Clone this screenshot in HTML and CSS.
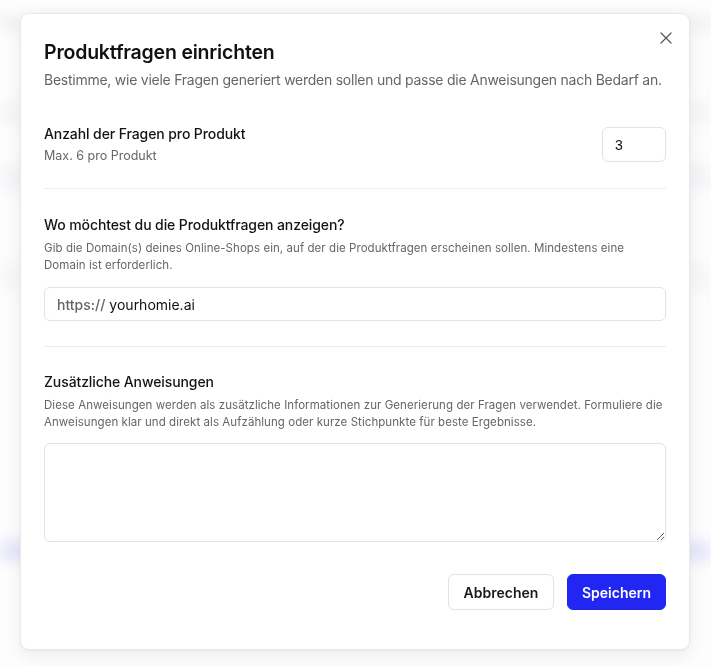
FILE: index.html
```html
<!DOCTYPE html>
<html lang="de">
<head>
<meta charset="utf-8">
<title>Produktfragen einrichten</title>
<link rel="stylesheet" href="styles.css">
</head>
<body>
<div class="backdrop">
  <div class="ghost ghost-a"></div>
  <div class="ghost ghost-b"></div>
  <div class="ghost ghost-c"></div>
  <div class="ghost ghost-d"></div>
  <div class="ghost ghost-e"></div>
</div>
<div class="overlay">
  <div class="modal">
    <button class="close" aria-label="Schließen">
      <svg width="12" height="12" viewBox="0 0 12 12"><path d="M1 1L11 11M11 1L1 11" stroke="#555" stroke-width="1.2" stroke-linecap="round" fill="none"/></svg>
    </button>
    <h1 class="title">Produktfragen einrichten</h1>
    <p class="subtitle">Bestimme, wie viele Fragen generiert werden sollen und passe die Anweisungen nach Bedarf an.</p>

    <div class="row">
      <div class="row-text">
        <div class="label">Anzahl der Fragen pro Produkt</div>
        <div class="hint-sm">Max. 6 pro Produkt</div>
      </div>
      <input class="num" type="text" value="3">
    </div>

    <div class="divider"></div>

    <div class="section">
      <div class="label">Wo möchtest du die Produktfragen anzeigen?</div>
      <p class="hint">Gib die Domain(s) deines Online-Shops ein, auf der die Produktfragen erscheinen sollen. Mindestens eine Domain ist erforderlich.</p>
      <div class="domain"><span class="prefix">https://</span><span class="value">yourhomie.ai</span></div>
    </div>

    <div class="divider divider-2"></div>

    <div class="section">
      <div class="label">Zusätzliche Anweisungen</div>
      <p class="hint">Diese Anweisungen werden als zusätzliche Informationen zur Generierung der Fragen verwendet. Formuliere die Anweisungen klar und direkt als Aufzählung oder kurze Stichpunkte für beste Ergebnisse.</p>
      <textarea class="area"></textarea>
    </div>

    <div class="footer">
      <button class="btn btn-secondary">Abbrechen</button>
      <button class="btn btn-primary">Speichern</button>
    </div>
  </div>
</div>
</body>
</html>
```
FILE: styles.css
```css
* { box-sizing: border-box; }
html, body { margin: 0; height: 100%; }
body {
  background: #fdfdfe;
  font-family: "Inter", "Noto Sans", sans-serif;
  color: #111;
  overflow: hidden;
}
.backdrop {
  height: 667px;
  display: flex;
  flex-direction: column;
  filter: blur(6px);
}
.ghost { width: 100%; }
.ghost-a { margin-top: 14px; height: 18px; background: #f3f3f5; }
.ghost-b { margin-top: 70px; height: 22px; background: #f6f6f8; }
.ghost-c { margin-top: 40px; height: 26px; background: #f5f5f8; }
.ghost-d { margin-top: 74px; height: 26px; background: #f7f7f9; }
.ghost-e { margin-top: 250px; height: 22px; background: #e8e8fb; }

.overlay {
  position: fixed;
  inset: 0;
  display: flex;
  justify-content: flex-start;
  align-items: flex-start;
  padding: 13px 0 0 20px;
}
.modal {
  position: relative;
  width: 670px;
  background: #fff;
  border: 1px solid #e9e9ec;
  border-radius: 9px;
  box-shadow: 0 6px 18px rgba(0,0,0,0.07), 0 1px 3px rgba(0,0,0,0.05);
  padding: 24px 23px 39px;
}
.close {
  position: absolute;
  top: 14px;
  right: 13px;
  width: 20px;
  height: 20px;
  padding: 0;
  border: 0;
  background: none;
  display: flex;
  align-items: center;
  justify-content: center;
}
.title {
  margin: 0;
  font-size: 19.5px;
  line-height: 28px;
  font-weight: 600;
  color: #111;
  letter-spacing: -0.2px;
}
.subtitle {
  margin: 4px 0 0;
  font-size: 14px;
  line-height: 20px;
  color: #666;
  letter-spacing: -0.25px;
}
.row {
  margin-top: 33px;
  display: flex;
  align-items: center;
  justify-content: space-between;
}
.label {
  font-size: 14px;
  line-height: 22px;
  font-weight: 500;
  color: #141414;
  letter-spacing: -0.1px;
}
.hint-sm {
  margin-top: 1px;
  font-size: 12.5px;
  line-height: 20px;
  color: #666;
}
.num {
  width: 64px;
  height: 35px;
  border: 1px solid #e3e3e6;
  border-radius: 6px;
  padding: 0 12px;
  font-family: "Liberation Sans", Arial, sans-serif;
  font-size: 14px;
  color: #111;
  background: #fff;
  outline: none;
}
.divider {
  height: 1px;
  background: #ececee;
  margin: 22px 0 25px;
}
.divider-2 { margin: 25px 0 24px; }
.section { display: flex; flex-direction: column; }
.hint {
  margin: 4px 0 0;
  font-size: 11.5px;
  line-height: 17px;
  color: #666;
  letter-spacing: 0.06px;
}
.domain {
  margin-top: 13px;
  height: 34px;
  border: 1px solid #e3e3e6;
  border-radius: 6px;
  display: flex;
  align-items: center;
  padding: 0 12px;
  font-size: 14px;
  gap: 4px;
}
.prefix { color: #666; font-weight: 500; }
.value { color: #111; }
.area {
  margin-top: 12px;
  height: 99px;
  width: 100%;
  border: 1px solid #e3e3e6;
  border-radius: 6px;
  resize: vertical;
  outline: none;
  font-family: inherit;
}
.footer {
  margin-top: 32px;
  display: flex;
  justify-content: flex-end;
  gap: 13px;
}
.btn {
  height: 36px;
  border-radius: 6px;
  font-family: inherit;
  font-size: 14px;
  font-weight: 600;
  padding: 0 12px;
  cursor: pointer;
}
.btn-secondary {
  width: 106px;
  background: #fff;
  color: #1a1a1a;
  border: 1px solid #e3e3e6;
}
.btn-primary {
  width: 99px;
  background: #2126f2;
  color: #fff;
  border: 1px solid #2126f2;
}
```
